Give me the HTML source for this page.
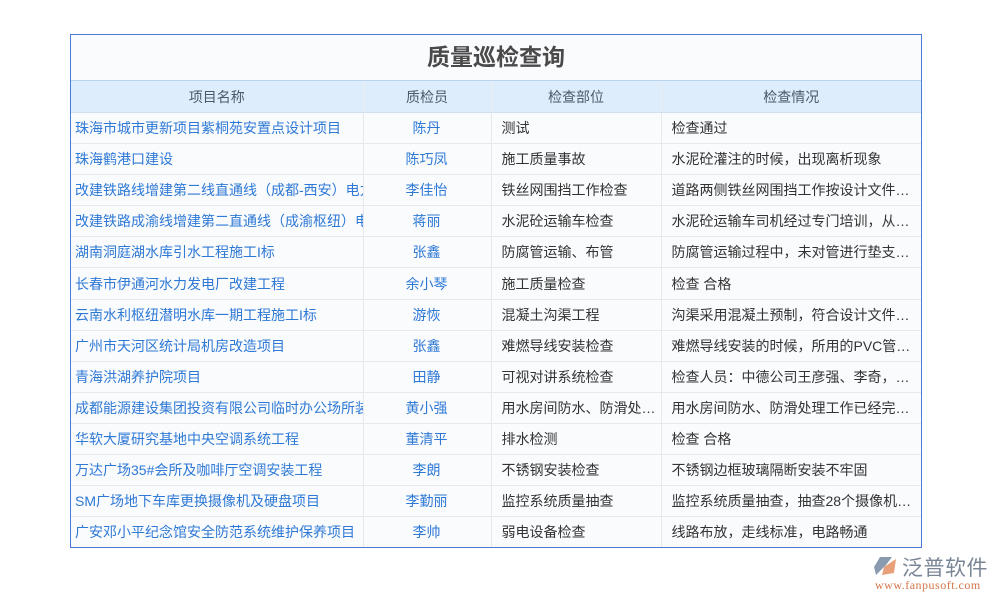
<!DOCTYPE html>
<html><head><meta charset="utf-8"><style>
body{margin:0;width:1000px;height:600px;background:#fff;position:relative;font-family:"Liberation Sans","Noto Sans CJK SC",sans-serif;overflow:hidden}
.box{position:absolute;left:70px;top:34px;width:850px;height:512px;border:1px solid #4a7ad8;background:#fafbfd;overflow:hidden}
.title{height:45px;line-height:44px;text-align:center;font-size:23px;font-weight:bold;color:#4a4a4a;border-bottom:1px solid #b8d4f0}
table{border-collapse:collapse;width:850px;table-layout:fixed;font-size:14px}
th{background:#deedfb;color:#4a5a6a;font-weight:normal;height:31px;padding:0;border-right:1px solid #e8eef4;border-bottom:1px solid #cfe0f0}
td{height:30.1px;padding:0 5px 0 4px;border-bottom:1px solid #e6e8ec;border-right:1px solid #e6e8ec;white-space:nowrap;overflow:hidden;text-overflow:ellipsis;color:#333}
td:last-child,th:last-child{border-right:none}
td:nth-child(1){color:#2e79d6;text-overflow:clip}
td:nth-child(2){color:#2e79d6;text-align:center}
td:nth-child(3),td:nth-child(4){padding-left:10px}
tr:last-child td{border-bottom:none}
.logo{position:absolute;left:872px;top:552px}
</style></head><body>
<div class="box">
<div class="title">质量巡检查询</div>
<table>
<colgroup><col style="width:292px"><col style="width:128px"><col style="width:170px"><col style="width:260px"></colgroup>
<tr><th>项目名称</th><th>质检员</th><th>检查部位</th><th>检查情况</th></tr>
<tr><td>珠海市城市更新项目紫桐苑安置点设计项目</td><td>陈丹</td><td>测试</td><td>检查通过</td></tr>
<tr><td>珠海鹤港口建设</td><td>陈巧凤</td><td>施工质量事故</td><td>水泥砼灌注的时候，出现离析现象</td></tr>
<tr><td>改建铁路线增建第二线直通线（成都-西安）电力</td><td>李佳怡</td><td>铁丝网围挡工作检查</td><td>道路两侧铁丝网围挡工作按设计文件施工</td></tr>
<tr><td>改建铁路成渝线增建第二直通线（成渝枢纽）电</td><td>蒋丽</td><td>水泥砼运输车检查</td><td>水泥砼运输车司机经过专门培训，从业资格</td></tr>
<tr><td>湖南洞庭湖水库引水工程施工I标</td><td>张鑫</td><td>防腐管运输、布管</td><td>防腐管运输过程中，未对管进行垫支保护</td></tr>
<tr><td>长春市伊通河水力发电厂改建工程</td><td>余小琴</td><td>施工质量检查</td><td>检查 合格</td></tr>
<tr><td>云南水利枢纽潜明水库一期工程施工I标</td><td>游恢</td><td>混凝土沟渠工程</td><td>沟渠采用混凝土预制，符合设计文件要求</td></tr>
<tr><td>广州市天河区统计局机房改造项目</td><td>张鑫</td><td>难燃导线安装检查</td><td>难燃导线安装的时候，所用的PVC管道规格</td></tr>
<tr><td>青海洪湖养护院项目</td><td>田静</td><td>可视对讲系统检查</td><td>检查人员：中德公司王彦强、李奇，检查</td></tr>
<tr><td>成都能源建设集团投资有限公司临时办公场所装修</td><td>黄小强</td><td>用水房间防水、防滑处理工作</td><td>用水房间防水、防滑处理工作已经完成，验收</td></tr>
<tr><td>华软大厦研究基地中央空调系统工程</td><td>董清平</td><td>排水检测</td><td>检查 合格</td></tr>
<tr><td>万达广场35#会所及咖啡厅空调安装工程</td><td>李朗</td><td>不锈钢安装检查</td><td>不锈钢边框玻璃隔断安装不牢固</td></tr>
<tr><td>SM广场地下车库更换摄像机及硬盘项目</td><td>李勤丽</td><td>监控系统质量抽查</td><td>监控系统质量抽查，抽查28个摄像机安装</td></tr>
<tr><td>广安邓小平纪念馆安全防范系统维护保养项目</td><td>李帅</td><td>弱电设备检查</td><td>线路布放，走线标准，电路畅通</td></tr>
</table>
</div>
<div class="logo">
<svg width="26" height="22" viewBox="0 0 26 22" style="position:absolute;left:0;top:3px"><path d="M8 2 L20 2 L14 10 L4 20 L2 12 Z" fill="#8a9bb0"/><path d="M12 12 L24 4 L22 18 L10 20 Z" fill="#e8a07a"/></svg>
<div style="position:absolute;left:30px;top:0;font-size:21px;color:#7a8696;white-space:nowrap;letter-spacing:0.5px">泛普软件</div>
<div style="position:absolute;left:3px;top:26px;font-size:12px;color:#d4754a;font-family:'Liberation Serif',serif;white-space:nowrap;letter-spacing:0.5px">www.fanpusoft.com</div>
</div>
</body></html>
